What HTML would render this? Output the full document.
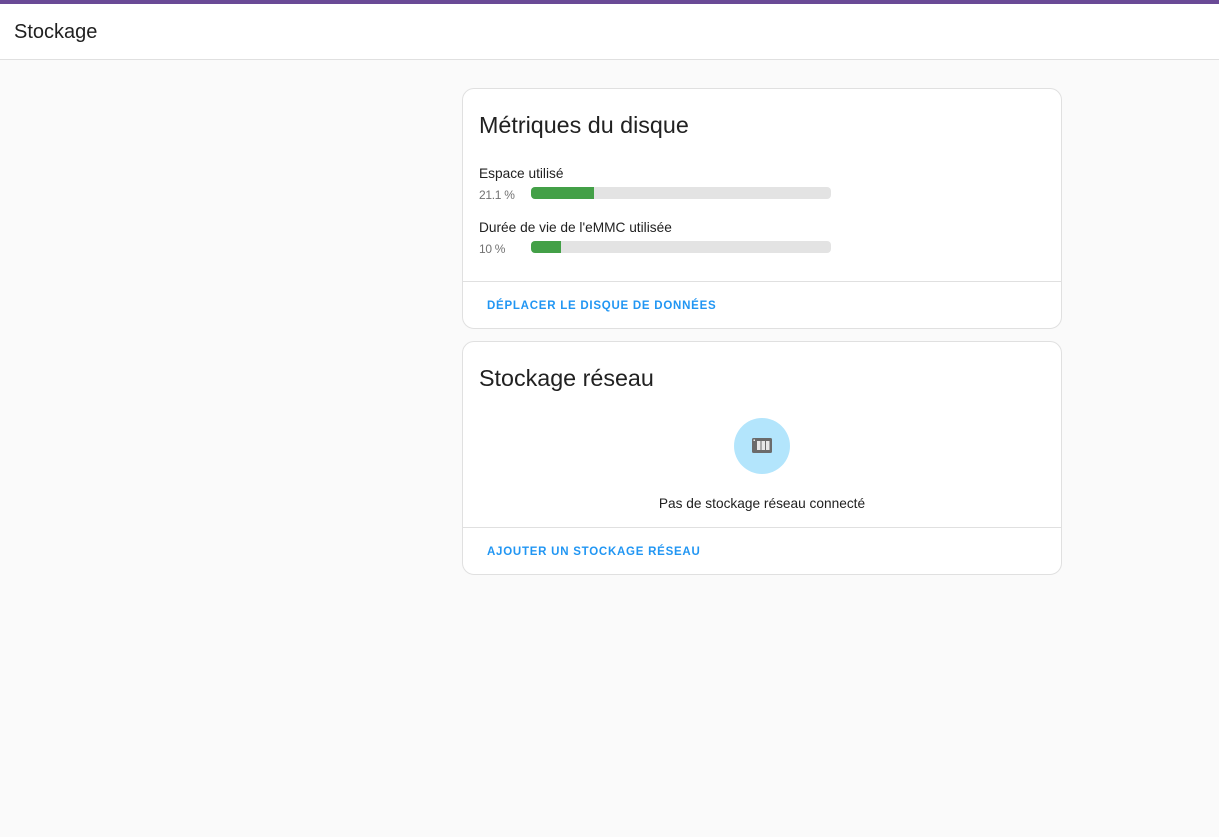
<!DOCTYPE html>
<html><head><meta charset="utf-8"><style>
*{margin:0;padding:0;box-sizing:border-box}
body{width:1219px;height:837px;background:#fafafa;font-family:"Liberation Sans",Roboto,sans-serif;color:#212121;position:relative;overflow:hidden}
.top{position:absolute;left:0;top:0;width:1219px;height:60px;background:#fff;border-top:4px solid #6a4a96;border-bottom:1px solid #e0e0e0}
.top span{position:absolute;left:14px;top:17px;font-size:20px}
.card{position:absolute;left:462px;width:600px;background:#fff;border:1px solid #e0e0e0;border-radius:12px}
.h{position:absolute;left:16px;font-size:23.3px}
.lbl{position:absolute;left:16px;font-size:13.7px}
.pct{position:absolute;left:16px;font-size:12px;color:#727272;letter-spacing:-0.3px}
.bar{position:absolute;left:68px;width:300px;height:12px;background:#e3e3e3;border-radius:4px;overflow:hidden}
.bar i{display:block;height:100%;background:#43a047}
.sep{position:absolute;left:0;right:0;height:1px;background:#e0e0e0}
.btn{position:absolute;left:24px;font-size:11.5px;font-weight:bold;letter-spacing:0.75px;color:#2196f3}
</style></head><body>
<div class="top"><span>Stockage</span></div>
<div class="card" style="top:88px;height:241px">
<div class="h" style="top:23px">Métriques du disque</div>
<div class="lbl" style="top:77px">Espace utilisé</div>
<div class="pct" style="top:99px">21.1 %</div>
<div class="bar" style="top:98px"><i style="width:63px"></i></div>
<div class="lbl" style="top:131px">Durée de vie de l'eMMC utilisée</div>
<div class="pct" style="top:153px">10 %</div>
<div class="bar" style="top:152px"><i style="width:30px"></i></div>
<div class="sep" style="top:192px"></div>
<div class="btn" style="top:211px">DÉPLACER LE DISQUE DE DONNÉES</div>
</div>
<div class="card" style="top:341px;height:234px">
<div class="h" style="top:23px">Stockage réseau</div>
<div style="position:absolute;left:271px;top:76px;width:56px;height:56px;border-radius:50%;background:#b3e5fc"></div>
<svg style="position:absolute;left:289px;top:96px" width="20" height="16" viewBox="0 0 20 16"><rect x="0" y="0" width="20" height="15" rx="1.5" fill="#6b6b6b"/><rect x="5" y="3" width="3.5" height="9" fill="#e8e8e8"/><rect x="9.5" y="3" width="3.5" height="9" fill="#e8e8e8"/><rect x="14" y="3" width="3.5" height="9" fill="#e8e8e8"/><rect x="1.5" y="1.5" width="1.5" height="1.5" fill="#e8e8e8"/></svg>
<div style="position:absolute;left:0;right:0;top:154px;text-align:center;font-size:13.7px">Pas de stockage réseau connecté</div>
<div class="sep" style="top:185px"></div>
<div class="btn" style="top:204px">AJOUTER UN STOCKAGE RÉSEAU</div>
</div>
</body></html>
